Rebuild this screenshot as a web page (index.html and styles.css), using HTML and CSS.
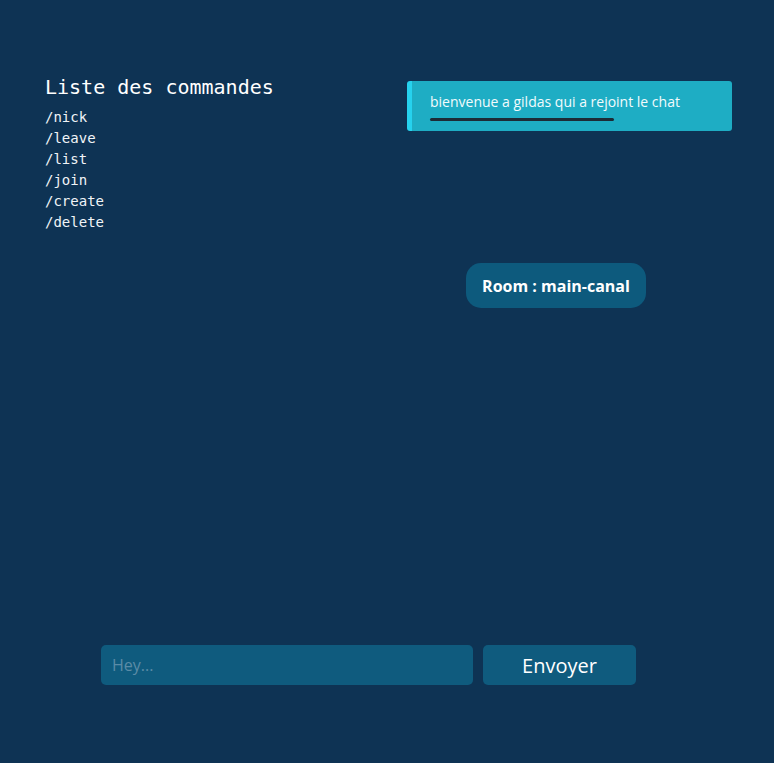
FILE: index.html
```html
<!DOCTYPE html>
<html lang="fr">
<head>
<meta charset="utf-8">
<title>Chat</title>
<link rel="stylesheet" href="styles.css">
</head>
<body>
<div class="page">
  <div class="top">
    <div class="commands">
      <h2 class="commands-title">Liste des commandes</h2>
      <ul class="commands-list">
        <li>/nick</li>
        <li>/leave</li>
        <li>/list</li>
        <li>/join</li>
        <li>/create</li>
        <li>/delete</li>
      </ul>
    </div>
    <div class="side">
      <div class="notif">
        <p class="notif-text">bienvenue a gildas qui a rejoint le chat</p>
        <div class="notif-bar"></div>
      </div>
      <div class="room">Room : main-canal</div>
    </div>
  </div>
  <form class="composer">
    <input class="composer-input" type="text" placeholder="Hey...">
    <button class="composer-btn" type="button">Envoyer</button>
  </form>
</div>
</body>
</html>
```
FILE: styles.css
```css
html, body {
  margin: 0;
  padding: 0;
  background: #0e3354;
}
.page {
  width: 774px;
  height: 763px;
  display: flex;
  flex-direction: column;
  font-family: "Open Sans", sans-serif;
}
.top {
  display: flex;
  padding-top: 75px;
  height: 569px;
  box-sizing: border-box;
}
.commands {
  width: 362px;
  padding-left: 45px;
  font-family: "DejaVu Sans Mono", monospace;
  color: #ffffff;
}
.commands-title {
  margin: 0 0 8px;
  font-size: 20px;
  font-weight: normal;
  line-height: 24px;
}
.commands-list {
  list-style: none;
  margin: 0;
  padding: 0;
  font-size: 14px;
  line-height: 21px;
  color: #f1f4f7;
}
.side {
  display: flex;
  flex-direction: column;
  padding-top: 6px;
}
.notif {
  width: 325px;
  height: 50px;
  box-sizing: border-box;
  background: #1eadc4;
  border-left: 5px solid #26d2ee;
  border-radius: 3px;
  padding: 11px 0 0 18px;
}
.notif-text {
  margin: 0;
  font-size: 14px;
  line-height: 19px;
  color: #f2fbfd;
}
.notif-bar {
  margin-top: 7px;
  width: 184px;
  height: 3px;
  border-radius: 2px;
  background: #1d2b36;
}
.room {
  margin: 132px 0 0 59px;
  width: 180px;
  height: 45px;
  box-sizing: border-box;
  border-radius: 15px;
  background: #0d5a7d;
  color: #ffffff;
  font-weight: bold;
  font-size: 16px;
  display: flex;
  align-items: center;
  justify-content: center;
}
.composer {
  display: flex;
  gap: 10px;
  margin: 76px 0 0 101px;
}
.composer-input {
  width: 372px;
  height: 40px;
  box-sizing: border-box;
  border: none;
  border-radius: 5px;
  background: #0f5b7e;
  padding: 0 11px;
  font-family: "Open Sans", sans-serif;
  font-size: 16px;
  color: #ffffff;
  outline: none;
}
.composer-input::placeholder {
  color: #5b8ba6;
}
.composer-btn {
  width: 153px;
  height: 40px;
  border: none;
  border-radius: 5px;
  background: #0f5b7e;
  color: #ffffff;
  font-family: "Open Sans", sans-serif;
  font-size: 20px;
  padding: 0;
}
```
